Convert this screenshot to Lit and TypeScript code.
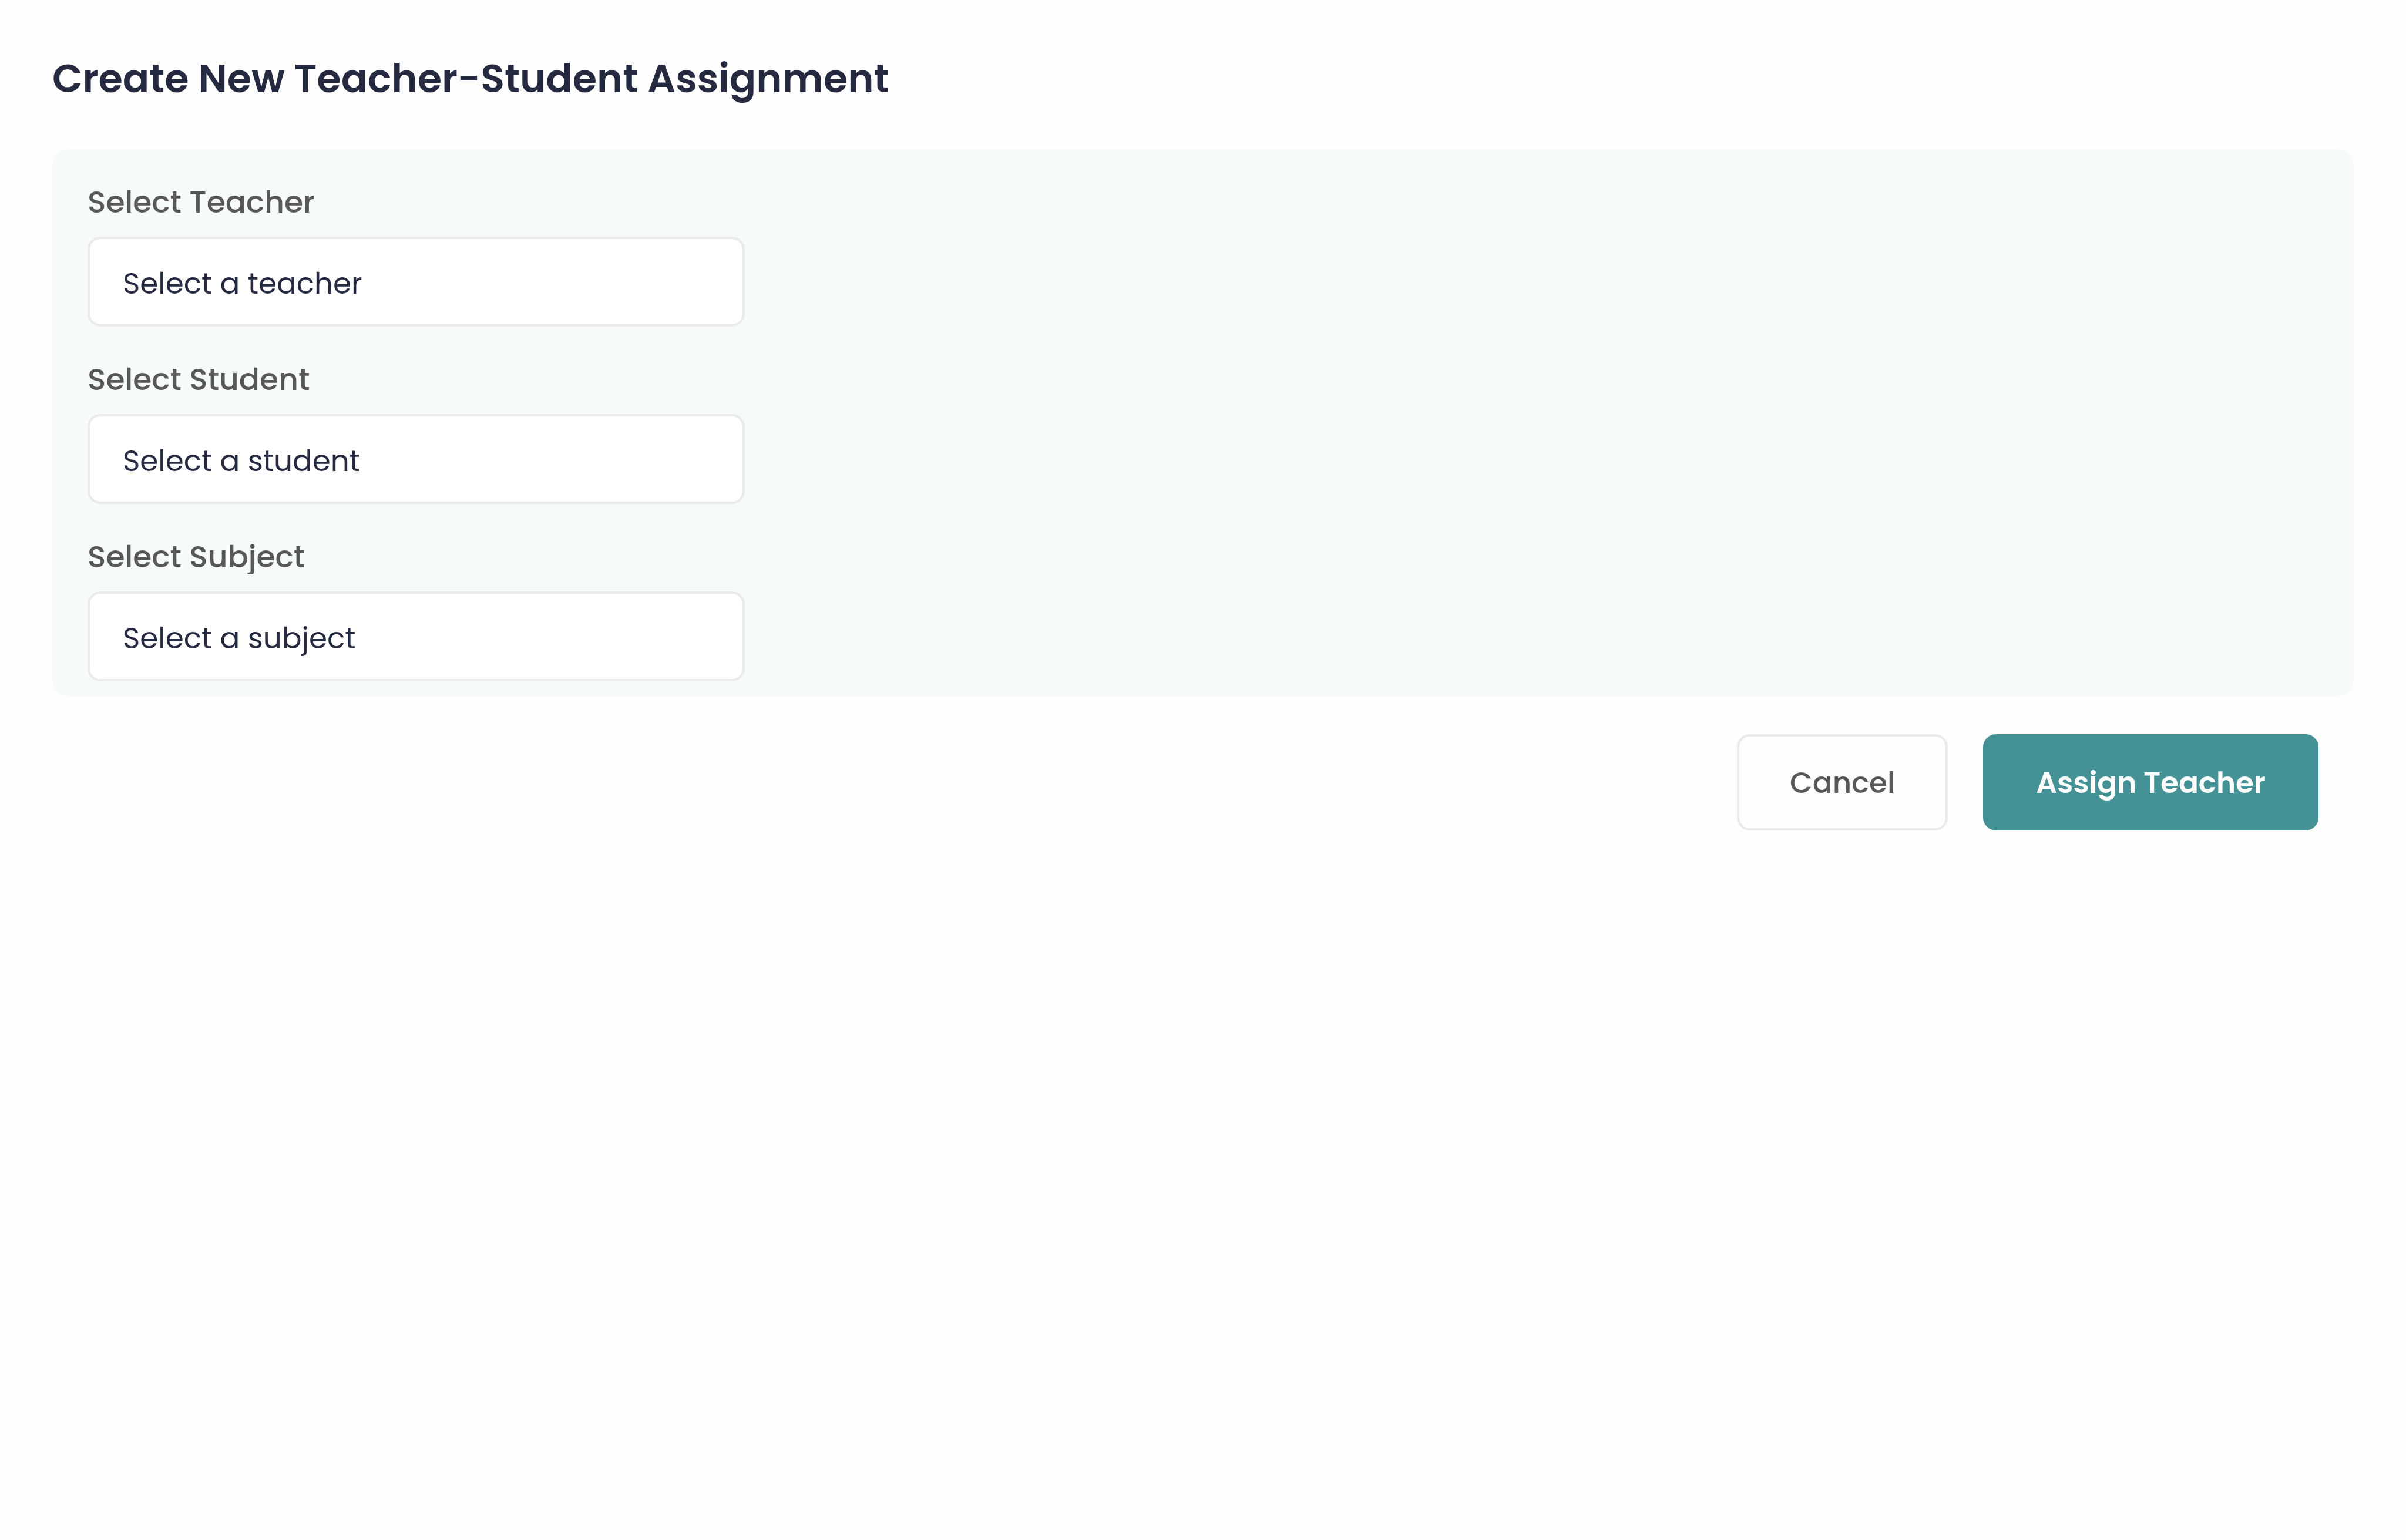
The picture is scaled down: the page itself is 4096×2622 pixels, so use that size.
import { LitElement, html, css } from "lit";
import { customElement } from "lit/decorators.js";

interface Field {
  id: string;
  label: string;
  placeholder: string;
}

const FIELDS: Field[] = [
  { id: "teacher", label: "Select Teacher", placeholder: "Select a teacher" },
  { id: "student", label: "Select Student", placeholder: "Select a student" },
  { id: "subject", label: "Select Subject", placeholder: "Select a subject" },
];

@customElement("app-root")
export class AppRoot extends LitElement {
  static styles = css`
    :host {
      display: block;
      min-height: 100vh;
      box-sizing: border-box;
      padding: 89px;
      background: #fefefe;
      color: #262a41;
      font-family: Poppins, Inter, "Open Sans", sans-serif;
    }
    .title {
      margin: 0 0 75px;
      font-size: 67px;
      line-height: 90px;
      font-weight: 600;
    }
    .panel {
      display: flex;
      flex-direction: column;
      gap: 61px;
      padding: 61px 60px 26px;
      border-radius: 30px;
      background: #f6fafb;
    }
    .field {
      display: flex;
      flex-direction: column;
      gap: 30px;
    }
    .label {
      overflow: hidden;
      font-size: 52px;
      line-height: 58px;
      font-weight: 500;
      color: #585858;
    }
    .select {
      appearance: none;
      box-sizing: border-box;
      width: 1119px;
      max-width: 100%;
      height: 153px;
      margin: 0;
      padding: 6px 56px 0;
      border: 4px solid #eaeaea;
      border-radius: 22px;
      background: #ffffff;
      color: inherit;
      font: inherit;
      font-size: 50px;
    }
    .actions {
      display: flex;
      justify-content: flex-end;
      gap: 60px;
      padding: 64px 60px 0;
    }
    .button {
      box-sizing: border-box;
      height: 164px;
      padding: 2px 86px 0;
      border: 4px solid #eaeaea;
      border-radius: 22px;
      background: transparent;
      color: #585858;
      font: inherit;
      font-size: 50px;
      font-weight: 500;
    }
    .primary {
      border-color: #449295;
      background: #449295;
      color: #ffffff;
      font-weight: 600;
    }
  `;

  render() {
    return html`
      <form @submit=${(e: Event) => e.preventDefault()}>
        <h1 class="title">Create New Teacher-Student Assignment</h1>
        <div class="panel">
          ${FIELDS.map(
            (f) => html`
              <div class="field">
                <label class="label" for=${f.id}>${f.label}</label>
                <select class="select" id=${f.id} name=${f.id}>
                  <option value="">${f.placeholder}</option>
                </select>
              </div>
            `,
          )}
        </div>
        <div class="actions">
          <button class="button" type="button">Cancel</button>
          <button class="button primary" type="submit">Assign Teacher</button>
        </div>
      </form>
    `;
  }
}
